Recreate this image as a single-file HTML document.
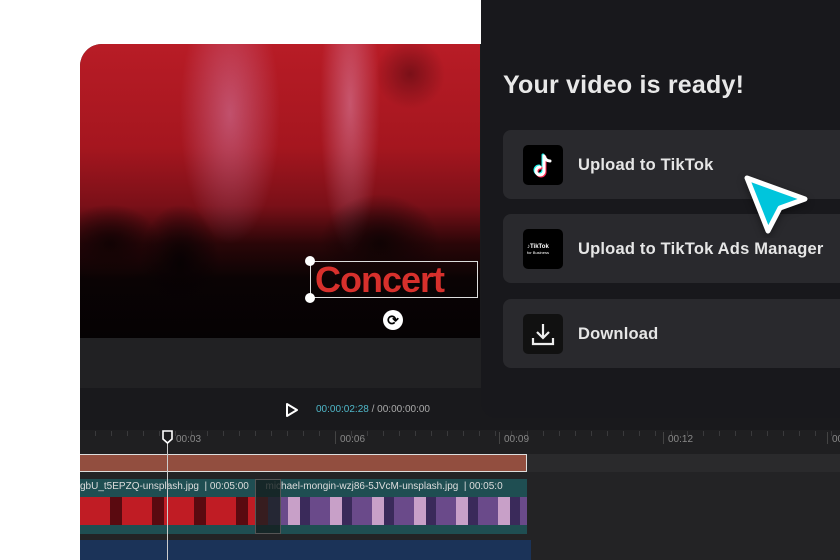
<!DOCTYPE html>
<html><head><style>
*{margin:0;padding:0;box-sizing:border-box}
html,body{width:840px;height:560px;overflow:hidden}
body{background:#fff;position:relative;font-family:"Liberation Sans",sans-serif}
.a{position:absolute}
.btn{position:absolute;left:503px;width:337px;height:69px;background:#29292d;border-radius:8px 0 0 8px}
.btn .ic{position:absolute;left:20px;top:15px;width:40px;height:40px;background:#000;border-radius:5px}
.btn .t{position:absolute;left:75px;top:26px;color:#e6e6e6;font-size:16.5px;font-weight:bold;letter-spacing:.2px;white-space:nowrap}
</style></head><body>
<div class="a" style="left:80px;top:44px;width:760px;height:516px;background:#1a1a1d;border-top-left-radius:22px;overflow:hidden">
 <div class="a" style="left:0;top:0;width:400px;height:294px;background:
  radial-gradient(ellipse 50px 130px at 150px 70px,rgba(220,150,200,.45),transparent),
  radial-gradient(ellipse 30px 150px at 270px 60px,rgba(230,160,200,.45),transparent),
  radial-gradient(circle 35px at 330px 30px,#7a1018,transparent),
  linear-gradient(180deg,#b81c26 0%,#a5161f 35%,#7a1018 55%,#2a0608 68%,#0a0304 80%,#050203 100%)"></div>
 <div class="a" style="left:0;top:0;width:400px;height:294px;background:
  radial-gradient(ellipse 40px 60px at 100px 220px,#080203,transparent),
  radial-gradient(ellipse 60px 50px at 300px 200px,#100304,transparent),radial-gradient(ellipse 50px 40px at 30px 200px,#120304,transparent)"></div>
 <div class="a" style="left:0;top:294px;width:760px;height:50px;background:#212123"></div>
 <div class="a" style="left:0;top:344px;width:760px;height:42px;background:#19191c"></div>
 <div class="a" style="left:0;top:386px;width:760px;height:24px;background:#1f1f21"></div>
 <div class="a" style="left:0;top:410px;width:760px;height:18px;background:#2a2a2c"></div>
 <div class="a" style="left:0;top:428px;width:760px;height:88px;background:#232325"></div>
 <div class="a" style="left:0;top:387px;width:760px;height:5px;background:repeating-linear-gradient(90deg,transparent 0 15px,#3a3a3c 15px 16px)"></div>
 <div class="a" style="left:96px;top:390px;font-size:10px;color:#888">00:03</div>
 <div class="a" style="left:260px;top:390px;font-size:10px;color:#888">00:06</div>
 <div class="a" style="left:424px;top:390px;font-size:10px;color:#888">00:09</div>
 <div class="a" style="left:588px;top:390px;font-size:10px;color:#888">00:12</div>
 <div class="a" style="left:752px;top:390px;font-size:10px;color:#888">00:15</div>
 <div class="a" style="left:255px;top:388px;width:1px;height:12px;background:#444"></div>
 <div class="a" style="left:419px;top:388px;width:1px;height:12px;background:#444"></div>
 <div class="a" style="left:583px;top:388px;width:1px;height:12px;background:#444"></div>
 <div class="a" style="left:747px;top:388px;width:1px;height:12px;background:#444"></div>
 <div class="a" style="left:0;top:410px;width:447px;height:18px;background:#924e3f;border:1px solid #ddd;border-left:none"></div>
 <div class="a" style="left:0;top:435px;width:447px;height:55px;background:#1f4e52"></div>
 <div class="a" style="left:0;top:437px;font-size:10px;color:#ddd;white-space:nowrap">gbU_t5EPZQ-unsplash.jpg &nbsp;| 00:05:00 &nbsp; &nbsp; &nbsp;michael-mongin-wzj86-5JVcM-unsplash.jpg &nbsp;| 00:05:0</div>
 <div class="a" style="left:0;top:453px;width:188px;height:28px;background:repeating-linear-gradient(90deg,#c01c24 0 30px,#5a0a10 30px 42px)"></div>
 <div class="a" style="left:188px;top:453px;width:259px;height:28px;background:repeating-linear-gradient(90deg,#6a4a8a 0 20px,#c8a0c8 20px 32px,#3a2a5a 32px 42px)"></div>
 <div class="a" style="left:175px;top:435px;width:26px;height:55px;background:rgba(20,30,30,.8);border:1px solid #555"></div>
 <div class="a" style="left:0;top:496px;width:451px;height:20px;background:#1b3358"></div>
 <div class="a" style="left:87px;top:394px;width:1px;height:122px;background:#ccc"></div>
</div>
<div class="a" style="left:230px;top:260px;width:250px;height:40px;font:bold 36px 'Liberation Sans',sans-serif;color:#d7302c;padding-left:85px;line-height:40px;letter-spacing:-1px">Concert</div>
<div class="a" style="left:310px;top:261px;width:168px;height:37px;border:1px solid #ddd"></div>
<div class="a" style="left:305px;top:256px;width:10px;height:10px;border-radius:50%;background:#fff"></div>
<div class="a" style="left:305px;top:293px;width:10px;height:10px;border-radius:50%;background:#fff"></div>
<div class="a" style="left:383px;top:310px;width:20px;height:20px;border-radius:50%;background:#fff;color:#000;font-size:14px;text-align:center;line-height:20px;font-weight:bold">⟳</div>
<svg class="a" style="left:285px;top:402px" width="14" height="16"><path d="M2 2 L12 8 L2 14Z" fill="none" stroke="#fff" stroke-width="2" stroke-linejoin="round"/></svg>
<div class="a" style="left:316px;top:404px;font-size:10px;color:#4fb7c8">00:00:02:28 <span style="color:#aaa">/ 00:00:00:00</span></div>
<svg class="a" style="left:162px;top:430px" width="11" height="15"><path d="M1 1H10V9L5.5 13L1 9Z" fill="#1c1c1e" stroke="#fff" stroke-width="1.6"/></svg>
<div class="a" style="left:481px;top:0;width:359px;height:418px;background:#18181c;border-radius:0 0 0 16px"></div>
<div class="a" style="left:503px;top:71px;font-size:25px;color:#e8e8e8;font-weight:bold;letter-spacing:.2px">Your video is ready!</div>
<div class="btn" style="top:130px"><div class="ic"><svg width="40" height="40"><g fill="none" stroke-width="3" stroke-linecap="round"><path d="M21 11V26a4 4 0 1 1-4-4" stroke="#25f4ee" transform="translate(-1 -1)"/><path d="M21 11V26a4 4 0 1 1-4-4" stroke="#fe2c55" transform="translate(1 1)"/><path d="M21 11V26a4 4 0 1 1-4-4M21 11c1 3 3 5 6 5" stroke="#fff"/></g></svg></div><div class="t">Upload to TikTok</div></div>
<div class="btn" style="top:214px"><div class="ic"><div style="color:#fff;font-size:6px;font-weight:bold;position:absolute;left:4px;top:15px;line-height:6px">♪TikTok<br><span style="font-weight:normal;font-size:4px">for Business</span></div></div><div class="t">Upload to TikTok Ads Manager</div></div>
<div class="btn" style="top:299px"><div class="ic" style="background:#111"><svg width="40" height="40"><g fill="none" stroke="#eee" stroke-width="2.2"><path d="M20 10V24M14 18L20 24L26 18M10 24V30H30V24"/></g></svg></div><div class="t">Download</div></div>
<svg class="a" style="left:735px;top:168px" width="80" height="70"><path d="M12 10 L70 31 L45 40 L33 63 Z" fill="#00c5dc" stroke="#fff" stroke-width="5" stroke-linejoin="round" style="filter:drop-shadow(0 3px 4px rgba(0,0,0,.4))"/></svg>
</body></html>
